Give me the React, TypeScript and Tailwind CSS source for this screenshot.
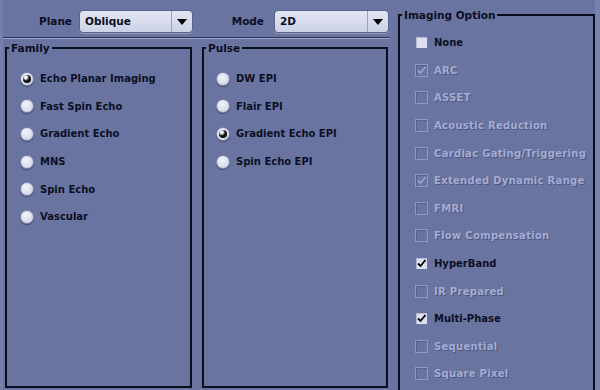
import React from "react";

const font = "font-['DejaVu_Sans',sans-serif] font-bold text-[10px]";

function Dropdown({ value, width }: { value: string; width: string }) {
  return (
    <div
      className={`${width} h-[23px] flex rounded-[4px] border border-[#59638e] bg-gradient-to-b from-[#e3e6f3] to-[#ccd1e6] shadow-[0_1px_0_rgba(255,255,255,0.25)]`}
    >
      <div className="flex-1 pl-[5px] leading-[21px] text-[10.5px] text-[#0c0f24]">{value}</div>
      <div className="w-[21px] border-l border-[#9aa2c4] flex items-center justify-center">
        <svg width="10" height="6" viewBox="0 0 10 6">
          <polygon points="0,0 10,0 5,6" fill="#000" />
        </svg>
      </div>
    </div>
  );
}

function Radio({ checked }: { checked?: boolean }) {
  return (
    <span className="w-[14px] h-[14px] shrink-0 rounded-full border border-[#7d86ad] bg-[radial-gradient(circle_at_40%_35%,#f3f4fb,#c9cee3)] shadow-[0_1px_1px_rgba(0,0,0,0.35)] flex items-center justify-center">
      {checked && (
        <span className="w-[8px] h-[8px] rounded-full bg-[radial-gradient(circle_at_35%_30%,#ffffff_0,#ffffff_15%,#111_45%,#000_100%)]" />
      )}
    </span>
  );
}

function Check({ checked, disabled }: { checked?: boolean; disabled?: boolean }) {
  return (
    <span
      className={
        disabled
          ? "w-[13px] h-[13px] shrink-0 border border-[#8f98bf] shadow-[inset_1px_1px_0_#56618c] flex items-center justify-center"
          : "w-[13px] h-[13px] shrink-0 border border-[#6d769e] bg-[#dcdfef] shadow-[inset_1px_1px_0_#b4b9d3] flex items-center justify-center"
      }
    >
      {checked && (
        <svg width="11" height="11" viewBox="0 0 11 11">
          <path
            d="M2 5.5 L4.5 8 L9.5 2"
            fill="none"
            stroke={disabled ? "#9aa3c8" : "#000"}
            strokeWidth="1.8"
          />
        </svg>
      )}
    </span>
  );
}

const family = [
  { label: "Echo Planar Imaging", checked: true },
  { label: "Fast Spin Echo" },
  { label: "Gradient Echo" },
  { label: "MNS" },
  { label: "Spin Echo" },
  { label: "Vascular" },
];

const pulse = [
  { label: "DW EPI" },
  { label: "Flair EPI" },
  { label: "Gradient Echo EPI", checked: true },
  { label: "Spin Echo EPI" },
];

const options = [
  { label: "None" },
  { label: "ARC", checked: true, disabled: true },
  { label: "ASSET", disabled: true },
  { label: "Acoustic Reduction", disabled: true },
  { label: "Cardiac Gating/Triggering", disabled: true },
  { label: "Extended Dynamic Range", checked: true, disabled: true },
  { label: "FMRI", disabled: true },
  { label: "Flow Compensation", disabled: true },
  { label: "HyperBand", checked: true },
  { label: "IR Prepared", disabled: true },
  { label: "Multi-Phase", checked: true },
  { label: "Sequential", disabled: true },
  { label: "Square Pixel", disabled: true },
];

export default function App() {
  return (
    <div className={`w-[600px] h-[390px] overflow-hidden bg-[#6975a0] text-[#0c0f24] flex ${font}`}>
      {/* Colonna sinistra */}
      <div className="w-[398px] shrink-0 border-l-[3px] border-[#7480aa]">
        <div className="h-[37px] flex items-start pt-[10px]">
          <div className="w-[69px] text-right leading-[23px] text-[10.5px]">Plane</div>
          <div className="ml-[7px]">
            <Dropdown value="Oblique" width="w-[114px]" />
          </div>
          <div className="w-[71px] text-right leading-[23px] text-[10.5px]">Mode</div>
          <div className="ml-[10px]">
            <Dropdown value="2D" width="w-[115px]" />
          </div>
        </div>
        <div className="w-[387px] h-[1px] bg-[#2c3356]" />
        <div className="w-[387px] h-[1px] bg-[#9ea7cb]" />

        <div className="mt-[3px] pl-[2px] flex gap-[10px] h-[346px]">
          <fieldset className="w-[187px] h-full border-2 border-[#0a0d1f]">
            <legend className="ml-[2px] px-[2px] leading-[12px] text-[10.5px]">Family</legend>
            <div className="pt-[11px] pl-[13px] flex flex-col">
              {family.map((f) => (
                <div key={f.label} className="h-[27.6px] flex items-center gap-[6px]">
                  <Radio checked={f.checked} />
                  <span>{f.label}</span>
                </div>
              ))}
            </div>
          </fieldset>
          <fieldset className="w-[186px] h-full border-2 border-[#0a0d1f]">
            <legend className="ml-[2px] px-[2px] leading-[12px] text-[10.5px]">Pulse</legend>
            <div className="pt-[11px] pl-[12px] flex flex-col">
              {pulse.map((f) => (
                <div key={f.label} className="h-[27.6px] flex items-center gap-[6px]">
                  <Radio checked={f.checked} />
                  <span>{f.label}</span>
                </div>
              ))}
            </div>
          </fieldset>
        </div>
      </div>

      {/* Imaging Option */}
      <fieldset className="w-[197px] shrink-0 mt-[9px] h-[400px] border-2 border-[#0a0d1f]">
        <legend className="ml-[2px] px-[2px] leading-[12px] text-[10.5px]">Imaging Option</legend>
        <div className="pt-[8px] pl-[15px] flex flex-col">
          {options.map((o) => (
            <div key={o.label} className="h-[27.6px] flex items-center gap-[6px]">
              <Check checked={o.checked} disabled={o.disabled} />
              <span
                className={
                  o.disabled
                    ? "text-[#a4acd1] tracking-[0.3px] [text-shadow:1px_1px_0_#4d5783]"
                    : ""
                }
              >
                {o.label}
              </span>
            </div>
          ))}
        </div>
      </fieldset>
      <div className="w-[5px] shrink-0 ml-auto bg-[#7682ad]" />
    </div>
  );
}
